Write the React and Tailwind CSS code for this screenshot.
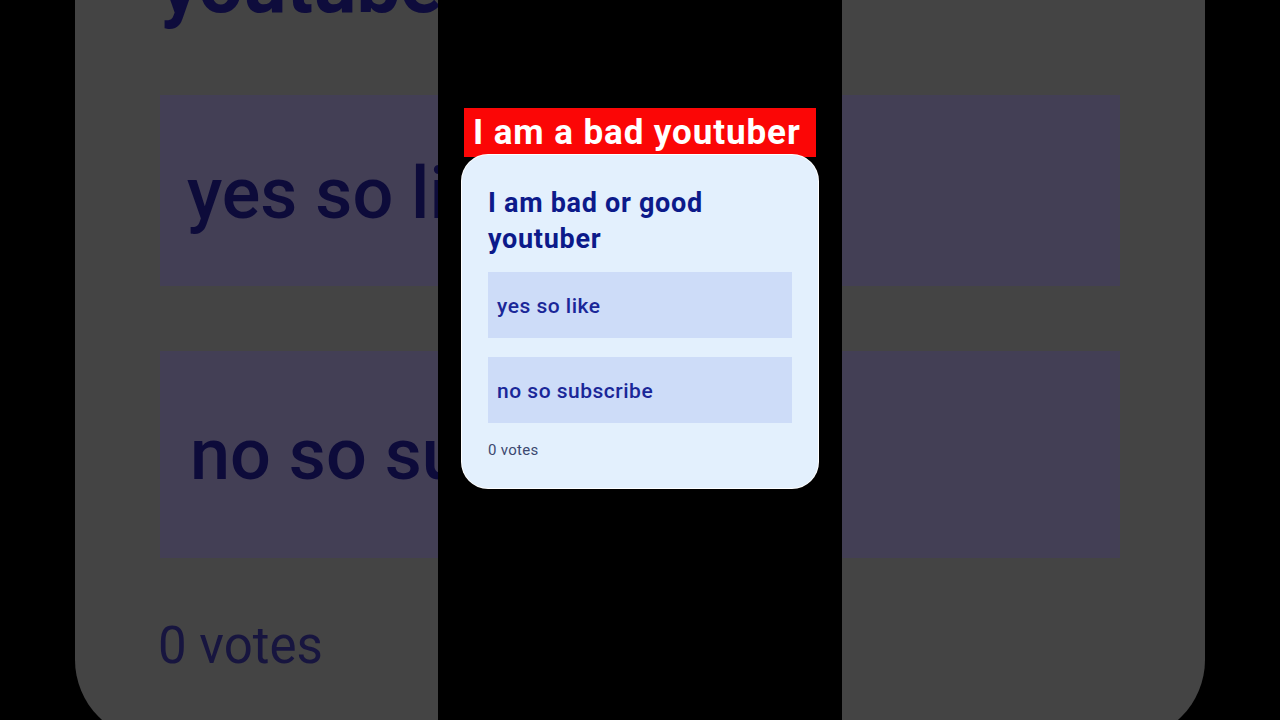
export default function App() {
    return (
        <div className="relative h-[720px] w-[1280px] overflow-hidden bg-black font-['Roboto',sans-serif]">
            {/* blurred-out background copy of the poll */}
            <div className="ml-[75px] -mt-[60px] h-[800px] w-[1130px] rounded-b-[80px] bg-[#444444] pl-[85px] pr-[85px]">
                <div className="pt-[7px] text-[78px] font-bold leading-none text-[#0e0c3c]">youtuber</div>
                <div className="mt-[70px] flex h-[191px] items-center bg-[#433f55] pl-[27px] pt-[6px]">
                    <span className="text-[72px] font-medium text-[#0d0b3a]">yes so like</span>
                </div>
                <div className="mt-[65px] flex h-[207px] items-center bg-[#433f55] pl-[30px]">
                    <span className="text-[72px] font-medium text-[#0d0b3a]">no so subscribe</span>
                </div>
                <div className="-ml-[2px] mt-[62px] text-[51px] leading-none text-[#17153f]">0 votes</div>
            </div>

            {/* centre column */}
            <div className="absolute left-[438px] top-0 h-full w-[404px] bg-black">
                <div className="ml-[26px] mt-[108px] flex h-[49px] w-[352px] items-center bg-[#fb0606] pl-[9px]">
                    <span className="text-[35px] font-bold leading-none tracking-[0.9px] text-white">I am a bad youtuber</span>
                </div>
                <div className="relative -mt-[2px] ml-[24px] h-[333px] w-[356px] rounded-[26px] bg-[#e3f0fd] px-[26px] pt-[30px] ring-1 ring-white">
                    <div className="text-[27px] font-bold leading-[36px] tracking-[0.7px] text-[#0c1a8a]">I am bad or good youtuber</div>
                    <div className="mt-[15px] flex h-[66px] items-center bg-[#cddcf8] pl-[9px] pt-[3px]">
                        <span className="text-[21px] font-medium tracking-[0.5px] text-[#1a2798]">yes so like</span>
                    </div>
                    <div className="mt-[19px] flex h-[66px] items-center bg-[#cddcf8] pl-[9px] pt-[3px]">
                        <span className="text-[21px] font-medium tracking-[0.5px] text-[#1a2798]">no so subscribe</span>
                    </div>
                    <div className="mt-[20px] text-[15px] leading-none tracking-[0.3px] text-[#3c4870]">0 votes</div>
                </div>
            </div>
        </div>
    );
}
